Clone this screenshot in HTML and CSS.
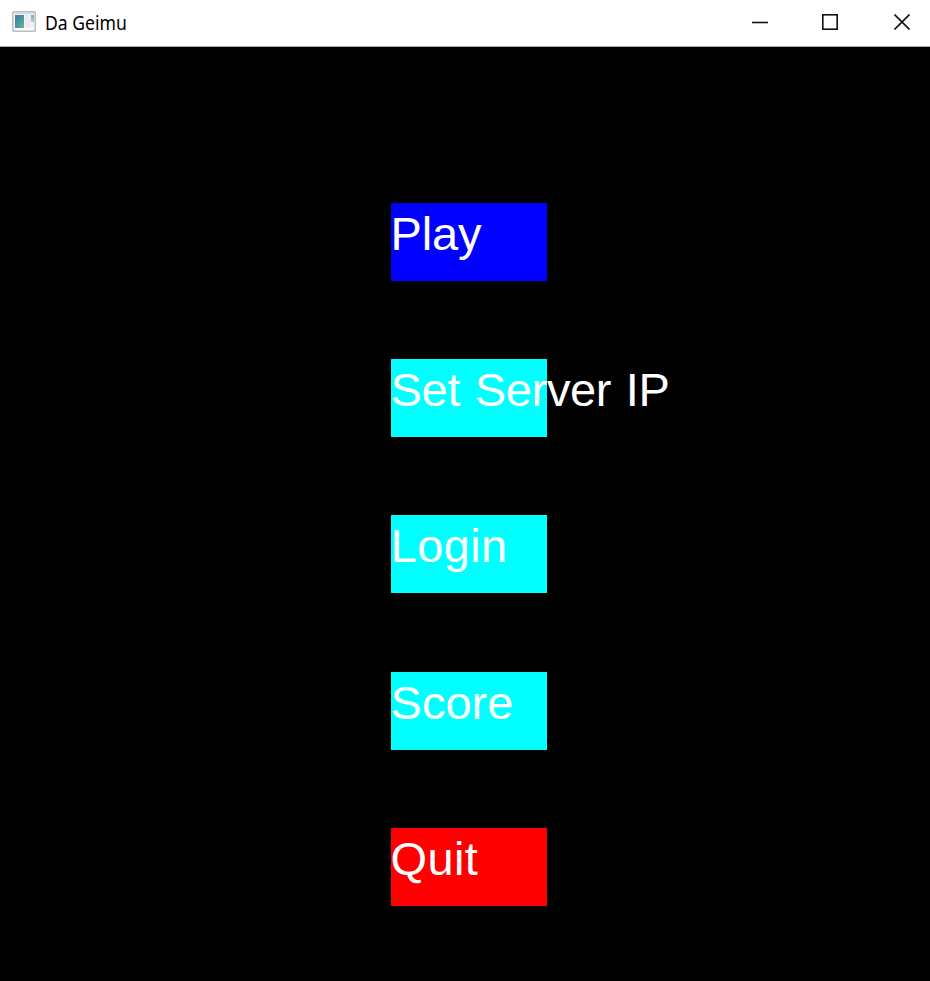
FILE: index.html
```html
<!DOCTYPE html>
<html lang="en">
<head>
<meta charset="utf-8">
<title>Da Geimu</title>
<link rel="stylesheet" href="styles.css">
</head>
<body>
<header class="titlebar">
  <svg class="app-icon" width="24" height="22" viewBox="0 0 24 22">
    <defs>
      <linearGradient id="pane" x1="0" y1="0" x2="1" y2="1">
        <stop offset="0" stop-color="#4a78a8"/>
        <stop offset="0.55" stop-color="#4a9aa0"/>
        <stop offset="1" stop-color="#6dbb7c"/>
      </linearGradient>
      <linearGradient id="side" x1="0" y1="0" x2="0" y2="1">
        <stop offset="0" stop-color="#80a8d8"/>
        <stop offset="1" stop-color="#a5dba8"/>
      </linearGradient>
    </defs>
    <rect x="0.75" y="0.75" width="22.5" height="19.5" rx="1" fill="#f4f5f6" stroke="#b9bec3" stroke-width="1.5"/>
    <path d="M2 2.5H22" stroke="#d3dce5" stroke-width="1.5"/>
    <rect x="3" y="4" width="9" height="13" fill="url(#pane)"/>
    <rect x="13" y="4" width="5.5" height="13" fill="#ececec"/>
    <rect x="19" y="4" width="3" height="7" fill="url(#side)"/>
    <path d="M3 18.3H21" stroke="#fff" stroke-width="1.5"/>
  </svg>
  <h1 class="title">Da Geimu</h1>
  <div class="controls">
    <svg width="16" height="16" viewBox="0 0 16 16"><path d="M0 8.5H16" stroke="#111" stroke-width="1.6"/></svg>
    <svg class="maximize" width="16" height="16" viewBox="0 0 16 16"><rect x="0.8" y="0.8" width="14.4" height="14.4" fill="none" stroke="#111" stroke-width="1.6"/></svg>
    <svg width="16" height="16" viewBox="0 0 16 16"><path d="M0.5 0.5L15.5 15.5M15.5 0.5L0.5 15.5" stroke="#111" stroke-width="1.6"/></svg>
  </div>
</header>
<main class="menu">
  <button class="item play">Play</button>
  <button class="item server">Set Server IP</button>
  <button class="item login">Login</button>
  <button class="item">Score</button>
  <button class="item quit">Quit</button>
</main>
</body>
</html>
```
FILE: styles.css
```css
* { box-sizing: border-box; }
body {
  margin: 0;
  height: 981px;
  display: flex;
  flex-direction: column;
  background: #000;
  overflow: hidden;
}
.titlebar {
  height: 47px;
  flex: none;
  display: flex;
  align-items: center;
  padding: 0 20px 3px 12px;
  background: #fff;
  border-bottom: 1px solid #aaa;
}
.app-icon { flex: none; }
.title {
  margin: 2px 0 0 9px;
  font: 400 19px/26px "Noto Sans", "Open Sans", sans-serif;
  color: #000;
  transform: scaleX(0.925);
  transform-origin: left center;
  white-space: nowrap;
}
.controls {
  margin-left: auto;
  display: flex;
  gap: 55px;
}
.controls svg { display: block; }
.controls .maximize { margin: 0 1px 0 -1px; }
.menu {
  flex: 1;
  display: flex;
  flex-direction: column;
  gap: 78.2px;
  padding: 156px 0 0 390.6px;
}
.item {
  flex: none;
  width: 156.2px;
  height: 78px;
  padding: 0;
  border: 0;
  background: #0ff;
  color: #fff;
  font: 47px/61px "Liberation Sans", Arial, sans-serif;
  text-align: left;
  white-space: nowrap;
  display: flex;
  align-items: flex-start;
}
.play { background: #00f; letter-spacing: -0.2px; }
.server { letter-spacing: -0.35px; word-spacing: 2px; }
.login { letter-spacing: 0.4px; }
.quit { background: #f00; letter-spacing: 0.3px; }
```
